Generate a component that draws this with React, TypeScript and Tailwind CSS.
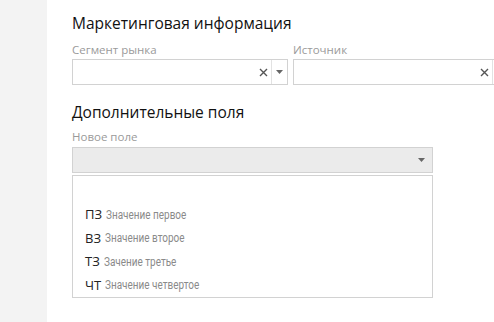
import React from "react";

const Cross = () => (
  <svg width="9" height="9" viewBox="0 0 9 9" className="block">
    <path d="M1 1L8 8M8 1L1 8" stroke="#555" strokeWidth="1.4" />
  </svg>
);

const Caret = () => (
  <svg width="7" height="4" viewBox="0 0 7 4" className="block">
    <path d="M0 0H7L3.5 4Z" fill="#666" />
  </svg>
);

const ComboField = ({ label }: { label: string }) => (
  <div className="flex shrink-0 flex-col">
    <div className="h-[16px] text-[11.5px] leading-[16px] text-[#9a9a9a]">{label}</div>
    <div className="mt-[1px] flex h-[26px] w-[216px] border border-[#d2d2d2] bg-white">
      <div className="flex-1" />
      <div className="flex w-[15px] items-center justify-center">
        <Cross />
      </div>
      <div className="flex w-[16px] items-center justify-center border-l border-[#e2e2e2]">
        <Caret />
      </div>
    </div>
  </div>
);

const items = [
  { code: "ПЗ", text: "Значение первое" },
  { code: "ВЗ", text: "Значение второе" },
  { code: "ТЗ", text: "Зачение третье" },
  { code: "ЧТ", text: "Значение четвертое" },
];

export default function App() {
  return (
    <div
      className="flex h-[322px] w-[494px] overflow-hidden bg-white text-[#111]"
      style={{ fontFamily: '"Open Sans", "Noto Sans", sans-serif' }}
    >
      <div className="w-[47px] shrink-0 bg-[#f3f3f3]" />
      <div className="flex min-w-0 flex-1 flex-col pl-[25px] pt-[13px]">
        <h2 className="h-[20px] text-[15.5px] leading-[20px]">Маркетинговая информация</h2>
        <div className="mt-[9px] flex gap-[5px]">
          <ComboField label="Сегмент рынка" />
          <ComboField label="Источник" />
        </div>

        <h2 className="mt-[17px] h-[20px] text-[15.5px] leading-[20px]">Дополнительные поля</h2>
        <div className="mt-[7px] h-[16px] text-[11.5px] leading-[16px] text-[#9a9a9a]">Новое поле</div>
        <div className="mt-[2px] flex h-[26px] w-[361px] items-center justify-end border border-[#d2d2d2] bg-[#ebebeb] pr-[7px]">
          <Caret />
        </div>
        <div className="mt-[2px] flex h-[123px] w-[361px] flex-col border border-[#d2d2d2] pl-[12px] pt-[27px]">
          {items.map((it) => (
            <div key={it.code} className="flex h-[24px] items-center gap-[4px]">
              <span className="text-[13px] text-[#222]">{it.code}</span>
              <span
                className="inline-block origin-left scale-x-[0.83] whitespace-nowrap text-[12px] text-[#8a8a8a]"
                style={{ fontFamily: '"Roboto", sans-serif' }}
              >
                {it.text}
              </span>
            </div>
          ))}
        </div>
      </div>
    </div>
  );
}
